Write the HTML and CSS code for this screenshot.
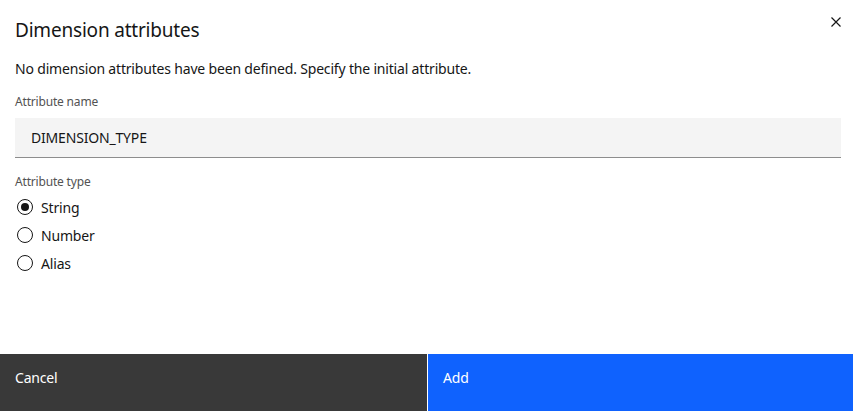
FILE: index.html
```html
<!DOCTYPE html>
<html lang="en">
<head>
<meta charset="utf-8">
<title>Dimension attributes</title>
<link rel="stylesheet" href="styles.css">
</head>
<body>
<div class="modal">
  <div class="modal-body">
    <div class="modal-header">
      <h2 class="modal-title">Dimension attributes</h2>
      <button class="modal-close" aria-label="Close">
        <svg width="16" height="16" viewBox="0 0 16 16" aria-hidden="true">
          <path d="M3.5 3.5l9 9M12.5 3.5l-9 9" stroke="#161616" stroke-width="1.2" fill="none"/>
        </svg>
      </button>
    </div>
    <p class="modal-text">No dimension attributes have been defined. Specify the initial attribute.</p>
    <label class="field-label" for="attr-name">Attribute name</label>
    <input class="text-input" id="attr-name" type="text" value="DIMENSION_TYPE">
    <fieldset class="radio-group">
      <legend class="field-label">Attribute type</legend>
      <label class="radio"><span class="radio-dot checked"></span><span>String</span></label>
      <label class="radio"><span class="radio-dot"></span><span>Number</span></label>
      <label class="radio"><span class="radio-dot"></span><span>Alias</span></label>
    </fieldset>
  </div>
  <div class="modal-footer">
    <button class="btn btn-secondary">Cancel</button>
    <button class="btn btn-primary">Add</button>
  </div>
</div>
</body>
</html>
```

FILE: styles.css
```css
* { box-sizing: border-box; }

html, body {
  margin: 0;
  height: 100%;
}

body {
  font-family: "Noto Sans", "Open Sans", sans-serif;
  color: #161616;
  background: #fff;
  letter-spacing: -0.18px;
}

.modal {
  display: flex;
  flex-direction: column;
  height: 411px;
}

.modal-body {
  flex: 1;
  display: flex;
  flex-direction: column;
  padding: 16px 12px 0 15px;
}

.modal-header {
  display: flex;
  justify-content: space-between;
  align-items: flex-start;
}

.modal-title {
  margin: 0;
  font-size: 19px;
  line-height: 28px;
  font-weight: 400;
  letter-spacing: -0.2px;
}

.modal-close {
  border: 0;
  background: none;
  padding: 0;
  width: 16px;
  height: 16px;
  margin: -2px -3px 0 0;
}

.modal-text {
  margin: 15px 0 0;
  font-size: 14px;
  line-height: 20px;
}

.field-label {
  display: block;
  font-size: 12px;
  line-height: 16px;
  color: #525252;
  padding: 0;
}

.modal-text + .field-label {
  margin-top: 15px;
}

.text-input {
  margin-top: 8px;
  height: 40px;
  width: 100%;
  border: 0;
  border-bottom: 1px solid #8d8d8d;
  background: #f4f4f4;
  padding: 0 16px;
  font-family: inherit;
  font-size: 14px;
  letter-spacing: inherit;
  color: #161616;
  outline: none;
}

.radio-group {
  border: 0;
  margin: 16px 0 0;
  padding: 0;
  display: flex;
  flex-direction: column;
  gap: 8px;
}

.radio-group legend {
  margin-bottom: 7px;
}

.radio {
  display: flex;
  align-items: center;
  gap: 8px;
  height: 20px;
  font-size: 14px;
  padding-left: 2px;
}

.radio-dot {
  width: 16px;
  height: 16px;
  border: 1px solid #161616;
  border-radius: 50%;
  display: flex;
  align-items: center;
  justify-content: center;
}

.radio-dot.checked::after {
  content: "";
  width: 8px;
  height: 8px;
  border-radius: 50%;
  background: #161616;
}

.modal-footer {
  display: grid;
  grid-template-columns: 427px 1fr;
  height: 57px;
  gap: 1px;
}

.btn {
  border: 0;
  color: #fff;
  font-family: inherit;
  font-size: 14px;
  letter-spacing: inherit;
  line-height: 18px;
  text-align: left;
  padding: 15px 15px 0 15px;
  display: flex;
  align-items: flex-start;
}

.btn-secondary { background: #393939; }
.btn-primary { background: #0f62fe; }
```
